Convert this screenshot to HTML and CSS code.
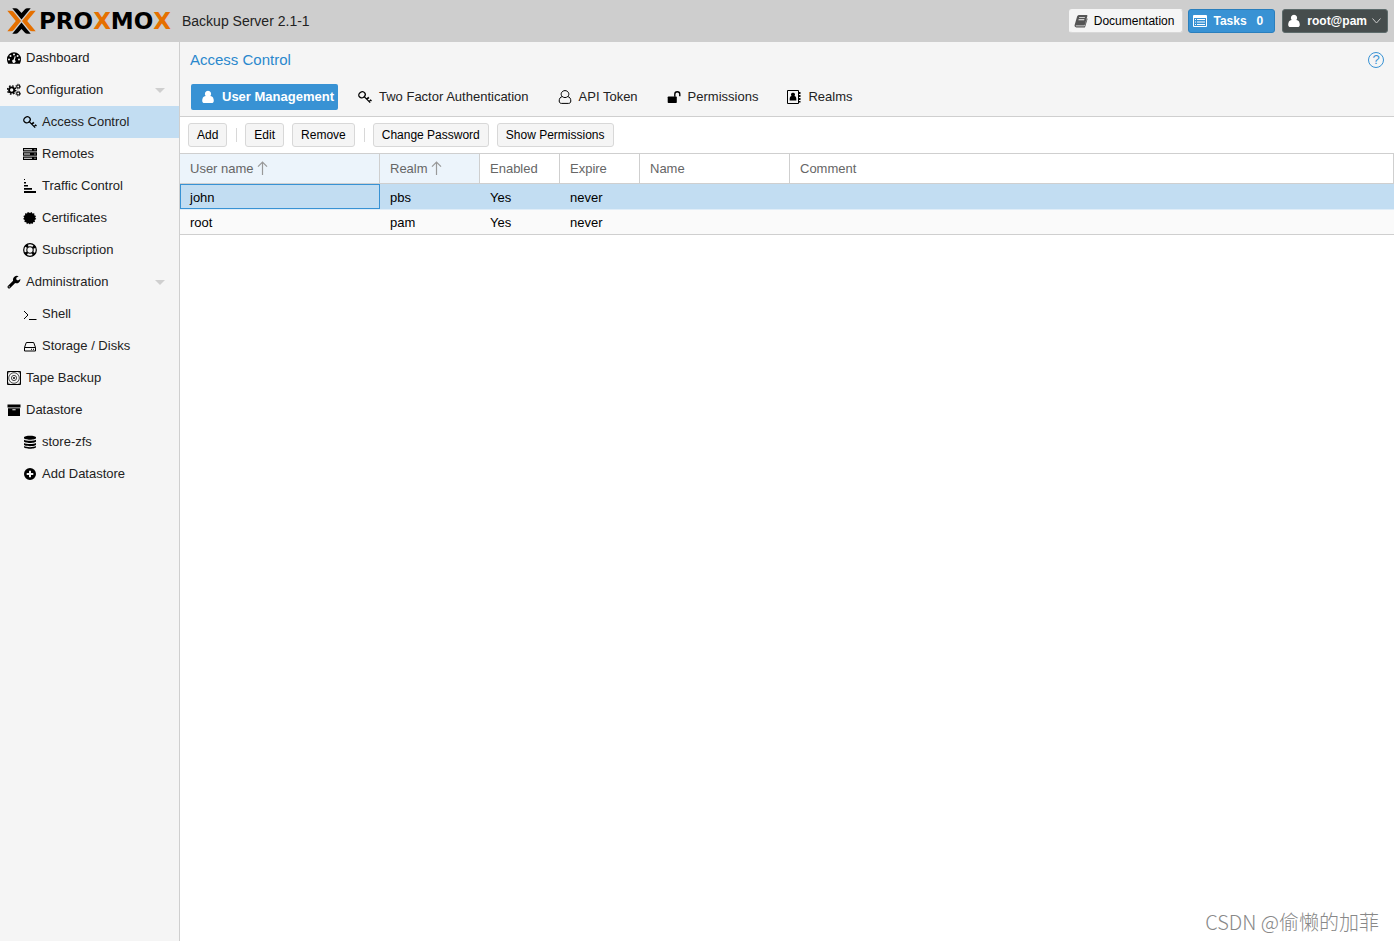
FILE: index.html
```html
<!DOCTYPE html>
<html lang="en">
<head>
<meta charset="utf-8">
<title>Proxmox Backup Server</title>
<link rel="stylesheet" href="styles.css">
</head>
<body>
<svg class="sprite" aria-hidden="true">
  <symbol id="dashboard" viewBox="0 0 14 14"><path fill-rule="evenodd" d="M7 1.2a7 7 0 0 1 7 7c0 1.7-.5 3.200-1.200 4.500H1.200A7.500 7.500 0 0 1 0 8.200a7 7 0 0 1 7-7zM2 7.400a1 1 0 1 0 0 2 1 1 0 0 0 0-2zM3.500 3.900a1 1 0 1 0 0 2 1 1 0 0 0 0-2zM7 2.400a1 1 0 1 0 0 2 1 1 0 0 0 0-2zM10.600 3.900a1 1 0 1 0 0 2 1 1 0 0 0 0-2zM12 7.400a1 1 0 1 0 0 2 1 1 0 0 0 0-2zM7.700 5.200L6.700 8.600a1.600 1.600 0 1 0 1.100.3l1-3.400z"/></symbol>
  <symbol id="gears" viewBox="0 0 15 14"><g fill="none" stroke="currentColor"><circle cx="5" cy="7" r="2.800" stroke-width="2"/><circle cx="5" cy="7" r="4.400" stroke-width="1.500" stroke-dasharray="1.700 1.756"/><circle cx="12" cy="3.300" r="1.600" stroke-width="1.100"/><circle cx="12" cy="3.300" r="2.500" stroke-width="1" stroke-dasharray="1 .963"/><circle cx="12" cy="10.800" r="1.600" stroke-width="1.100"/><circle cx="12" cy="10.800" r="2.500" stroke-width="1" stroke-dasharray="1 .963"/></g></symbol>
  <symbol id="key" viewBox="0 0 14 14"><g fill="none" stroke="currentColor" stroke-width="1.300"><ellipse cx="4" cy="4.800" rx="3.300" ry="2.900" transform="rotate(-35 4 4.800)"/><path d="M6.200 6.600l6 6M8.700 9.200l1.900-1.900M11.100 11.600l1.700-1.700M9.800 7.300l1.200 1.200M12.200 9.700l1.300 1.200"/></g></symbol>
  <symbol id="server" viewBox="0 0 14 14"><path fill-rule="evenodd" d="M0 1h14v3.400H0zM0 5.300h14v3.400H0zM0 9.600h14V13H0zM1 2.200v1h8v-1zM1 6.500v1h6v-1zM1 10.800v1h8v-1zM11.500 2.200v1h1v-1zM11.500 6.500v1h1v-1zM11.500 10.800v1h1v-1z"/></symbol>
  <symbol id="traffic" viewBox="0 0 14 14"><path d="M1 0h1v1H1zM1 3h2v1.500H1zM1 6h4v1.600H1zM1 9h8v1.800H1zM1 12h12v2H1z"/></symbol>
  <symbol id="certificate" viewBox="0 0 14 14"><path d="M7 2l1.600-1.100.8 1.700 1.900-.3v1.900l1.800.8-1 1.600 1.200 1.400-1.700 1 .4 1.900-1.900.3-.5 1.800-1.800-.7L7 13.500l-1.400-1.200-1.800.7-.5-1.800-1.900-.3.4-1.900-1.700-1 1.200-1.400-1-1.600 1.800-.8V2.300l1.900.3.800-1.700z"/></symbol>
  <symbol id="lifering" viewBox="0 0 14 14"><g fill="none" stroke="currentColor"><circle cx="7" cy="7" r="6.300" stroke-width="1.200"/><circle cx="7" cy="7" r="3.200" stroke-width="1.100"/><circle cx="7" cy="7" r="4.900" stroke-width="3" stroke-dasharray="2.600 5.097" stroke-dashoffset="-2.550"/></g></symbol>
  <symbol id="wrench" viewBox="0 0 14 14"><path fill-rule="evenodd" d="M1.100 10.800l5-5a4 4 0 0 1 5.600-4.600L9.300 2.700v1.900l1.600.9 2.500-1.500a4 4 0 0 1-5.200 4.100l-5 5a1.400 1.400 0 0 1-2.100-2.300zM2.200 11.200a.6.6 0 1 0 0 1.200.6.6 0 0 0 0-1.200z"/></symbol>
  <symbol id="terminal" viewBox="0 0 14 14"><path fill="none" stroke="currentColor" d="M1 4l4 4-4 4M6 12.500h7.500"/></symbol>
  <symbol id="disk" viewBox="0 0 14 14"><path fill="none" stroke="currentColor" d="M1.500 8.500h11v3.500h-11zM1.500 8.500l1.800-5h7.400l1.800 5M8 10.300h1M10 10.300h1"/></symbol>
  <symbol id="tape" viewBox="0 0 14 14"><g fill="none" stroke="currentColor"><path d="M.5.5h13v13H.5z"/><circle cx="7" cy="7" r="5.300" stroke-width=".7"/><circle cx="7" cy="7" r="2.600" stroke-width=".7"/></g><circle cx="7" cy="7" r="1"/><path d="M1.300 1.300h1.400L1.300 2.700zM12.700 1.300v1.400l-1.400-1.400zM1.300 12.700v-1.400l1.400 1.400zM12.700 12.700h-1.400l1.400-1.400z"/></symbol>
  <symbol id="archive" viewBox="0 0 14 14"><path fill-rule="evenodd" d="M.5 1.500h13v3H.5zM1 5.300h12v7.700H1zM5.400 6.200v1h3.200v-1z"/></symbol>
  <symbol id="database" viewBox="0 0 14 14"><path d="M1 2.300C1 .1 13 .1 13 2.300v.8c0 2.200-12 2.200-12 0zM1 4.700c2 1.400 10 1.400 12 0v1.600c0 2.200-12 2.200-12 0zM1 7.900c2 1.400 10 1.400 12 0v1.600c0 2.200-12 2.200-12 0zM1 11.100c2 1.400 10 1.400 12 0v1c0 2.300-12 2.300-12 0z"/></symbol>
  <symbol id="plus" viewBox="0 0 14 14"><path fill-rule="evenodd" d="M7 1a6 6 0 1 1 0 12A6 6 0 0 1 7 1zM6 3.700V6H3.700v2H6v2.300h2V8h2.300V6H8V3.700z"/></symbol>
  <symbol id="user" viewBox="0 0 14 14"><path d="M7 .8a3.100 3.100 0 0 1 2.400 5.100c2.500.2 3.400 2.500 3.400 4.900 0 1.400-.9 2.300-2.200 2.300H3.400c-1.300 0-2.200-.9-2.200-2.300 0-2.400.9-4.700 3.400-4.900A3.100 3.100 0 0 1 7 .8z"/></symbol>
  <symbol id="user-o" viewBox="0 0 14 14"><path fill="none" stroke="currentColor" d="M4.300 6.600C1.800 4.400 3.700.6 7 .6s5.200 3.800 2.700 6c2.200.3 3.100 2.200 3.100 4.400 0 1.500-.9 2.400-2.200 2.400H3.400c-1.300 0-2.200-.9-2.200-2.400 0-2.200.9-4.100 3.100-4.400 1.700 1.300 3.700 1.300 5.400 0"/></symbol>
  <symbol id="unlock" viewBox="0 0 14 14"><path d="M1.500 6.500H9q.8 0 .8.800v4.900q0 .8-.8.800H1.500q-.8 0-.8-.8V7.300q0-.8.800-.8z"/><path fill="none" stroke="currentColor" stroke-width="1.400" d="M7.800 6.800V4.300C7.800.9 12.800.9 12.800 4.300v2"/></symbol>
  <symbol id="book-user" viewBox="0 0 14 14"><path fill="none" stroke="currentColor" d="M.5.500h11v13H.500z"/><path d="M12 2h1.500v2H12zM12 5h1.500v2H12zM12 8h1.500v2H12zM12 11h1.500v1.500H12zM6 2.700A1.900 1.900 0 0 1 7.400 6C8.800 6.200 9.300 7.400 9.300 8.700V10.500H2.700V8.700c0-1.300.5-2.500 1.900-2.700A1.900 1.900 0 0 1 6 2.700z"/></symbol>
  <symbol id="book" viewBox="0 0 14 14"><path fill-rule="evenodd" d="M4.800 1h7.900q.9.200.7 1.100l-2.500 8.400q-.3.900-1.200.9H2.300q-.9 0-.6.600.1.300.7.300h8.100L13 4.200q.7.500.5 1.100l-2.300 7.400q-.3.900-1.200.9H2.300Q.4 13.200.5 11.500L3.100 2.500Q3.600 1 4.800 1zM5.300 3.200l-.3.900h5.700l.3-.9zM4.700 5.300l-.3.900h5.700l.3-.9z"/></symbol>
  <symbol id="list" viewBox="0 0 14 14"><path fill-rule="evenodd" d="M1 1h12q1 0 1 1v10q0 1-1 1H1q-1 0-1-1V2q0-1 1-1zM1 4v8h12V4z"/><path d="M2 5h1v1H2zM4 5h8v1H4zM2 7.500h1v1H2zM4 7.500h8v1H4zM2 10h1v1H2zM4 10h8v1H4z"/></symbol>
  <symbol id="sort" viewBox="0 0 11 14"><path fill="none" stroke="currentColor" stroke-width="1.200" d="M5.500 14V1M1 5.700L5.500 1 10 5.700"/></symbol>
</svg>

<header class="topbar">
  <div class="brand">
    <svg class="brand-mark" viewBox="0 0 29 26" aria-hidden="true">
      <g fill="#e57000"><path d="M.3 2.700H4q1.600 0 2.700 1.200L14 13l-7.300 9.100q-1.100 1.200-2.700 1.200H.3L8.800 13z"/><path d="M28.700 2.700H25q-1.600 0-2.700 1.200L15 13l7.300 9.100q1.100 1.200 2.700 1.200h3.700L20.200 13z"/></g>
      <path d="M5.300.2h3.200q1.700 0 2.800 1.200l3.200 3.700 3.200-3.700Q18.800.2 20.500.2h3.200L14.500 11.400zM5.300 25.800h3.200q1.700 0 2.800-1.200l3.200-3.700 3.200 3.700q1.100 1.200 2.800 1.200h3.200L14.500 14.600z"/>
    </svg>
    <span class="wordmark">PRO<b>X</b>MO<b>X</b></span>
  </div>
  <span class="product">Backup Server 2.1-1</span>
  <div class="top-actions">
    <button class="top-btn docs"><svg class="icon"><use href="#book"/></svg>Documentation</button>
    <button class="top-btn tasks"><svg class="icon"><use href="#list"/></svg>Tasks<span class="count">0</span></button>
    <button class="top-btn account"><svg class="icon"><use href="#user"/></svg>root@pam<svg class="chevron" viewBox="0 0 9 6" aria-hidden="true"><path d="M.5.5l4 4.500 4-4.500"/></svg></button>
  </div>
</header>

<div class="body">
  <nav class="sidebar">
    <a href="#" class="nav"><svg class="icon"><use href="#dashboard"/></svg>Dashboard</a>
    <a href="#" class="nav group"><svg class="icon"><use href="#gears"/></svg>Configuration</a>
    <a href="#" class="nav sub selected"><svg class="icon"><use href="#key"/></svg>Access Control</a>
    <a href="#" class="nav sub"><svg class="icon"><use href="#server"/></svg>Remotes</a>
    <a href="#" class="nav sub"><svg class="icon"><use href="#traffic"/></svg>Traffic Control</a>
    <a href="#" class="nav sub"><svg class="icon"><use href="#certificate"/></svg>Certificates</a>
    <a href="#" class="nav sub"><svg class="icon"><use href="#lifering"/></svg>Subscription</a>
    <a href="#" class="nav group"><svg class="icon"><use href="#wrench"/></svg>Administration</a>
    <a href="#" class="nav sub"><svg class="icon"><use href="#terminal"/></svg>Shell</a>
    <a href="#" class="nav sub"><svg class="icon"><use href="#disk"/></svg>Storage / Disks</a>
    <a href="#" class="nav"><svg class="icon"><use href="#tape"/></svg>Tape Backup</a>
    <a href="#" class="nav"><svg class="icon"><use href="#archive"/></svg>Datastore</a>
    <a href="#" class="nav sub"><svg class="icon"><use href="#database"/></svg>store-zfs</a>
    <a href="#" class="nav sub"><svg class="icon"><use href="#plus"/></svg>Add Datastore</a>
  </nav>

  <main class="content">
    <div class="panel-head">
      <div class="title-row">
        <h1>Access Control</h1>
        <button class="help" aria-label="Help">?</button>
      </div>
      <div class="tabs" role="tablist">
        <button class="tab active" role="tab" aria-selected="true"><svg class="icon"><use href="#user"/></svg>User Management</button>
        <button class="tab" role="tab"><svg class="icon"><use href="#key"/></svg>Two Factor Authentication</button>
        <button class="tab" role="tab"><svg class="icon"><use href="#user-o"/></svg>API Token</button>
        <button class="tab" role="tab"><svg class="icon"><use href="#unlock"/></svg>Permissions</button>
        <button class="tab" role="tab"><svg class="icon"><use href="#book-user"/></svg>Realms</button>
      </div>
    </div>

    <div class="toolbar">
      <button class="btn">Add</button>
      <span class="separator"></span>
      <button class="btn">Edit</button>
      <button class="btn">Remove</button>
      <span class="separator"></span>
      <button class="btn">Change Password</button>
      <button class="btn">Show Permissions</button>
    </div>

    <table class="grid">
      <colgroup><col class="w-user"><col class="w-realm"><col class="w-flag"><col class="w-flag"><col class="w-name"><col></colgroup>
      <thead>
        <tr>
          <th class="sorted">User name<svg class="sort"><use href="#sort"/></svg></th>
          <th class="sorted">Realm<svg class="sort"><use href="#sort"/></svg></th>
          <th>Enabled</th><th>Expire</th><th>Name</th><th>Comment</th>
        </tr>
      </thead>
      <tbody>
        <tr class="selected"><td class="focused">john</td><td>pbs</td><td>Yes</td><td>never</td><td></td><td></td></tr>
        <tr><td>root</td><td>pam</td><td>Yes</td><td>never</td><td></td><td></td></tr>
      </tbody>
    </table>
  </main>
</div>
<div class="watermark">CSDN @偷懒的加菲</div>
</body>
</html>
```

FILE: styles.css
```css
* { box-sizing: border-box; }

body {
  margin: 0;
  min-height: 100vh;
  display: flex;
  flex-direction: column;
  font: 13px/18px "Liberation Sans", Arial, sans-serif;
  color: #000;
  background: #fff;
}

button {
  font: inherit;
  color: inherit;
  margin: 0;
  white-space: nowrap;
}

.sprite { display: none; }

.icon {
  width: 14px;
  height: 14px;
  flex: none;
  fill: currentColor;
}

/* Top bar */
.topbar {
  display: flex;
  align-items: center;
  height: 42px;
  padding: 0 6px 0 7px;
  background: #cecece;
}

.brand {
  display: flex;
  align-items: center;
  gap: 3px;
  width: 175px;
}

.brand-mark {
  width: 29px;
  height: 26px;
}

.wordmark {
  font: bold 23px/26px "DejaVu Sans", sans-serif;
}

.wordmark b { color: #e57000; }

.product {
  font-size: 14px;
  color: #222;
}

.top-actions {
  display: flex;
  gap: 5px;
  margin-left: auto;
}

.top-btn {
  display: flex;
  align-items: center;
  height: 24px;
  padding: 0 8px 0 4px;
  border: 1px solid;
  border-radius: 3px;
  font-size: 12px;
}

.top-btn .icon { margin-right: 6px; }

.docs {
  background: #f5f5f5;
  border-color: #f5f5f5 #d8d8d8 #d8d8d8 #f5f5f5;
}

.docs .icon { color: #555; }

.tasks {
  background: #3892d4;
  border-color: #2a7fbd;
  color: #fff;
  font-weight: bold;
}

.count { padding: 0 3px 0 10px; }

.account {
  margin-left: 2px;
  padding-right: 6px;
  background: #464d4d;
  border-color: #5d6b6b;
  color: #fff;
  font-weight: bold;
}

.chevron {
  width: 9px;
  height: 6px;
  margin-left: 5px;
  fill: none;
  stroke: #ccc;
}

/* Main split */
.body {
  display: flex;
  flex: 1;
}

.sidebar {
  flex: none;
  width: 180px;
  background: #f5f5f5;
  border-right: 1px solid #cfcfcf;
}

.nav {
  display: flex;
  align-items: center;
  gap: 5px;
  height: 32px;
  padding: 0 14px 0 7px;
  color: #222;
  text-decoration: none;
}

.nav .icon { color: #000; }

.sub { padding-left: 23px; }

.nav.selected { background: #c2ddf2; }

.group::after {
  content: "";
  margin-left: auto;
  border: 5px solid transparent;
  border-top-color: #cfcfcf;
  border-bottom: 0;
}

.content {
  flex: 1;
  min-width: 0;
}

.panel-head {
  padding: 0 10px 6px;
  background: #f5f5f5;
  border-bottom: 1px solid #cfcfcf;
}

.title-row {
  display: flex;
  align-items: center;
  justify-content: space-between;
  height: 36px;
}

h1 {
  margin: 0;
  font-size: 15px;
  font-weight: normal;
  color: #2a88cd;
}

.help {
  width: 16px;
  height: 16px;
  padding: 0;
  border: 1px solid #3892d4;
  border-radius: 50%;
  background: none;
  color: #3892d4;
  font-size: 13px;
  line-height: 14px;
}

.tabs {
  display: flex;
  gap: 10px;
  padding: 6px 1px 0;
}

.tab {
  display: flex;
  align-items: center;
  gap: 7px;
  height: 26px;
  padding: 0 9px 0 10px;
  border: 0;
  border-radius: 2px;
  background: none;
  color: #222;
}

.tab .icon { color: #000; }

.tab.active {
  padding-right: 4px;
  background: #3892d4;
  color: #fff;
  font-weight: bold;
}

.tab.active .icon { color: #fff; }

/* Toolbar */
.toolbar {
  display: flex;
  align-items: center;
  gap: 8px;
  height: 36px;
  padding: 0 8px;
}

.btn {
  height: 24px;
  padding: 0 8px;
  border: 1px solid #d8d8d8;
  border-radius: 3px;
  background: #f5f5f5;
  font-size: 12px;
}

.separator {
  width: 1px;
  height: 14px;
  margin-left: 1px;
  background: #d8d8d8;
}

/* User grid */
.grid {
  width: 100%;
  table-layout: fixed;
  border-collapse: separate;
  border-spacing: 0;
  border-top: 1px solid #cfcfcf;
}

.w-user { width: 200px; }
.w-realm { width: 100px; }
.w-flag { width: 80px; }
.w-name { width: 150px; }

.grid th {
  height: 30px;
  padding: 0 10px;
  border-right: 1px solid #cfcfcf;
  border-bottom: 1px solid #cfcfcf;
  font-weight: normal;
  text-align: left;
  color: #666;
}

.grid .sorted { background: #ecf4fb; }

.sort {
  width: 11px;
  height: 14px;
  margin-left: 3px;
  vertical-align: -2px;
  color: #999;
}

.grid td {
  height: 25px;
  padding: 2px 10px 0;
  background: #fafafa;
  border-bottom: 1px solid #cfcfcf;
}

.grid .selected td {
  height: 26px;
  background: #c2ddf2;
  border-bottom-color: #e0edf8;
}

.grid .focused {
  box-shadow: inset 0 0 0 1px #3892d4;
}

.watermark {
  position: absolute;
  right: 15px;
  bottom: 4px;
  font: 300 20px/30px "Noto Sans CJK SC", sans-serif;
  color: #888;
}
```
